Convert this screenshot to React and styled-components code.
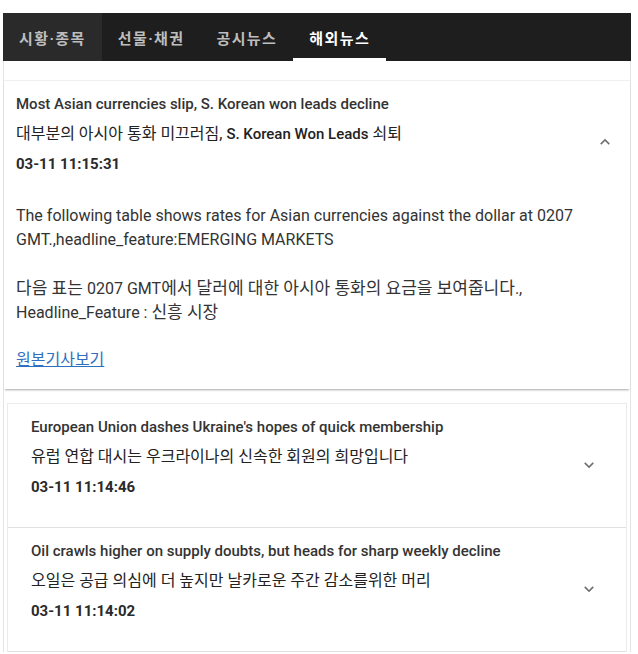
import React from 'react'
import styled, { createGlobalStyle } from 'styled-components'

const GlobalStyle = createGlobalStyle`
    body {
        margin: 0;
        background: #ffffff;
        font-family: Roboto, "Noto Sans CJK KR", sans-serif;
    }
`

const tabs = ['시황·종목', '선물·채권', '공시뉴스', '해외뉴스']

const news = [
    {
        title: "European Union dashes Ukraine's hopes of quick membership",
        korean: '유럽 연합 대시는 우크라이나의 신속한 회원의 희망입니다',
        date: '03-11 11:14:46'
    },
    {
        title: 'Oil crawls higher on supply doubts, but heads for sharp weekly decline',
        korean: '오일은 공급 의심에 더 높지만 날카로운 주간 감소를위한 머리',
        date: '03-11 11:14:02'
    }
]

const Chevron = ({ up }) => (
    <svg width="24" height="24" viewBox="0 0 24 24">
        <path
            d={up ? 'M7.41 15.41 12 10.83l4.59 4.58L18 14l-6-6-6 6z' : 'M16.59 8.59 12 13.17 7.41 8.59 6 10l6 6 6-6z'}
            fill="#6f6f6f"
            transform="translate(12 12) scale(0.8) translate(-12 -12)"
        />
    </svg>
)

export default function App() {
    return (
        <Page>
            <GlobalStyle />
            <TabBar>
                {tabs.map((t, i) => (
                    <Tab key={t} first={i === 0} active={i === 3}>{t}</Tab>
                ))}
            </TabBar>
            <Content>
                <Card expanded>
                    <Header expanded>
                        <HeaderText>
                            <Title>Most Asian currencies slip, S. Korean won leads decline</Title>
                            <Korean>대부분의 아시아 통화 미끄러짐, <Latin bold>S. Korean Won Leads</Latin> 쇠퇴</Korean>
                            <DateLine>03-11 11:15:31</DateLine>
                        </HeaderText>
                        <IconBox><Chevron up /></IconBox>
                    </Header>
                    <Body>
                        <Line>The following table shows rates for Asian currencies against the dollar at 0207</Line>
                        <Line>GMT.,headline_feature:EMERGING MARKETS</Line>
                        <Line>&nbsp;</Line>
                        <KoreanLine>다음 표는 <Latin>0207 GMT</Latin>에서 달러에 대한 아시아 통화의 요금을 보여줍니다<Latin>.,</Latin></KoreanLine>
                        <KoreanLine><Latin>Headline_Feature : </Latin>신흥 시장</KoreanLine>
                        <Line>&nbsp;</Line>
                        <Line><Link href="#">원본기사보기</Link></Line>
                    </Body>
                </Card>
                <List>
                    {news.map(n => (
                        <Card key={n.date}>
                            <Header>
                                <HeaderText>
                                    <Title>{n.title}</Title>
                                    <Korean>{n.korean}</Korean>
                                    <DateLine>{n.date}</DateLine>
                                </HeaderText>
                                <IconBox><Chevron /></IconBox>
                            </Header>
                        </Card>
                    ))}
                </List>
            </Content>
        </Page>
    )
}

const Page = styled.div`
    padding: 13px 0 0 3px;
    width: 628px;
`

const TabBar = styled.div`
    display: flex;
    height: 48px;
    background: #1e1e1e;
`

const Tab = styled.div`
    position: relative;
    display: flex;
    align-items: center;
    padding: 0 16px;
    min-width: 90px;
    justify-content: center;
    box-sizing: border-box;
    font-size: 15px;
    font-weight: 700;
    letter-spacing: 1.4px;
    color: ${p => (p.active ? '#ffffff' : '#bdbdbd')};
    background: ${p => (p.first ? '#2a2a2a' : 'transparent')};
    &::after {
        content: '';
        display: ${p => (p.active ? 'block' : 'none')};
        position: absolute;
        left: 0;
        right: 0;
        bottom: 0;
        height: 3px;
        background: #ffffff;
    }
`

const Content = styled.div`
    border-left: 1px solid #e4e4e4;
    border-right: 1px solid #e4e4e4;
    padding-top: 19px;
`

const List = styled.div`
    margin: 14px 3px 0;
    border: 1px solid #ebebeb;
    border-bottom: 0;
`

const Card = styled.div`
    background: #ffffff;
    border-top: ${p => (p.expanded ? '1px solid #f0f0f0' : '0')};
    border-bottom: ${p => (p.expanded ? '0' : '1px solid #e0e0e0')};
    box-shadow: ${p => (p.expanded ? '0 2px 2px -1px rgba(0,0,0,0.35)' : 'none')};
`

const Header = styled.div`
    display: flex;
    align-items: center;
    padding: ${p => (p.expanded ? '8px 13px 25px 12px' : '8px 25px 25px 23px')};
`

const HeaderText = styled.div`
    flex: 1;
    color: #222222;
`

const Title = styled.div`
    font-size: 15px;
    font-weight: 500;
    line-height: 30px;
    color: #333333;
`

const Korean = styled.div`
    font-size: 16px;
    line-height: 30px;
    height: 30px;
`

const Latin = styled.span`
    font-size: ${p => (p.bold ? '15px' : '16px')};
    font-weight: ${p => (p.bold ? 500 : 400)};
    line-height: 1;
`

const DateLine = styled.div`
    font-size: 15px;
    font-weight: 700;
    line-height: 30px;
    color: #2a2a2a;
`

const IconBox = styled.div`
    width: 24px;
    height: 24px;
    margin-top: 16px;
`

const Body = styled.div`
    padding: 0 16px 17px 12px;
    font-size: 16px;
    line-height: 24px;
    color: #333333;
`

const Line = styled.div`
    white-space: nowrap;
    height: 24px;
`

const KoreanLine = styled.div`
    white-space: nowrap;
    font-size: 17px;
    line-height: 24px;
    height: 24px;
`

const Link = styled.a`
    color: #2f6fbf;
    text-decoration: underline;
`
